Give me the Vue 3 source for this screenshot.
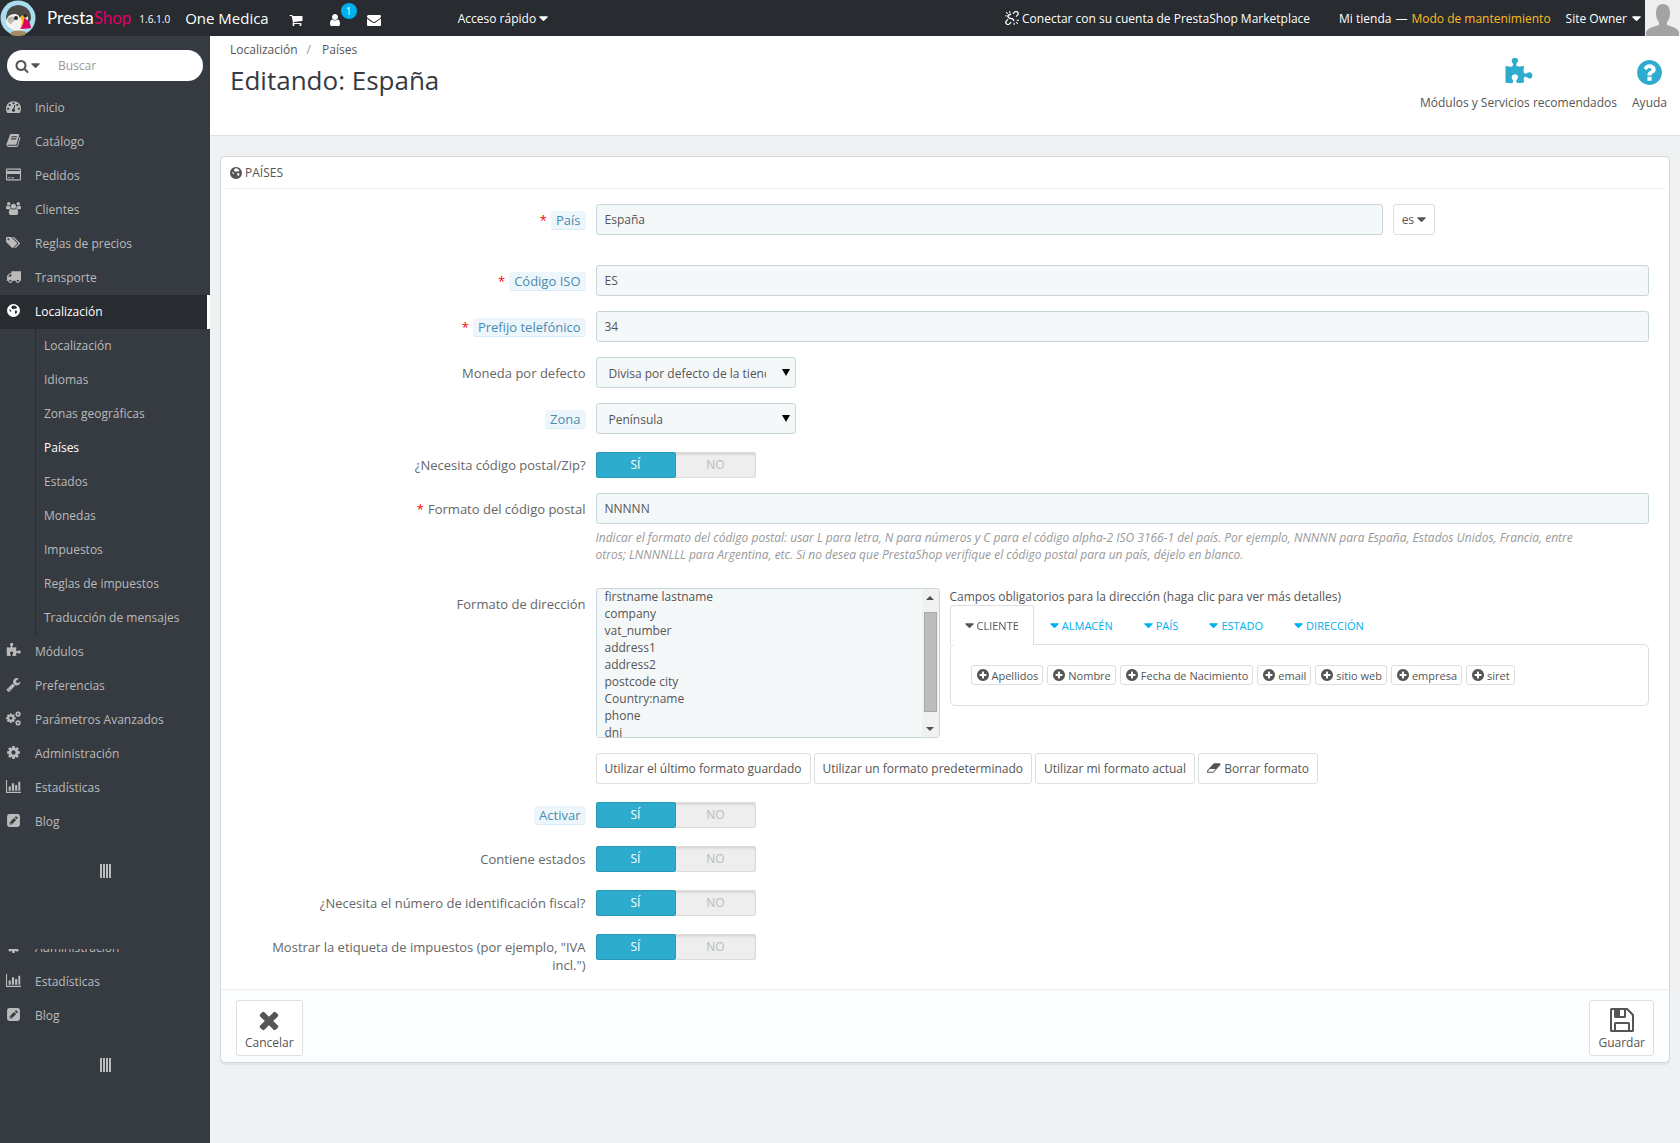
<script setup>
import { computed, h, onMounted, reactive, ref } from 'vue'

const gear = 'M1152 896q0-106-75-181t-181-75-181 75-75 181 75 181 181 75 181-75 75-181zm512-109v222q0 12-8 23t-20 13l-185 28q-19 54-39 91 35 50 107 138 10 12 10 25t-9 23q-27 37-99 108t-94 71q-12 0-26-9l-138-108q-44 23-91 38-16 136-29 186-7 28-36 28h-222q-14 0-24.5-8.5t-11.5-21.5l-28-184q-49-16-90-37l-141 107q-10 9-25 9-14 0-25-11-126-114-165-168-7-10-7-23 0-12 8-23 15-21 51-66.5t54-70.5q-27-50-41-99l-183-27q-13-2-21-12.5t-8-23.5v-222q0-12 8-23t19-13l186-28q14-46 39-92-40-57-107-138-10-12-10-24 0-10 9-23 26-36 98.5-107.5t94.5-71.5q13 0 26 10l138 107q44-23 91-38 16-136 29-186 7-28 36-28h222q14 0 24.5 8.5t11.5 21.5l28 184q49 16 90 37l142-107q9-9 24-9 13 0 25 10 129 119 165 170 7 8 7 22 0 12-8 23-15 21-51 66.5t-54 70.5q26 50 41 98l183 28q13 2 21 12.5t8 23.5z'
const disc = 'M1664 896q0 209-103 385.500t-279.500 279.500-385.500 103-385.500-103-279.500-279.500-103-385.500 103-385.500 279.500-279.500 385.500-103 385.500 103 279.500 279.500 103 385.500z'

const icons = {
  search: 'M1216 832q0-185-131.500-316.500t-316.500-131.500-316.500 131.500-131.500 316.500 131.500 316.500 316.500 131.500 316.500-131.500 131.500-316.500zm512 832q0 52-38 90t-90 38q-54 0-90-38l-343-342q-179 124-399 124-143 0-273.500-55.500t-225-150-150-225-55.500-273.500 55.500-273.500 150-225 225-150 273.500-55.500 273.500 55.500 225 150 150 225 55.500 273.500q0 220-124 399l343 343q37 37 37 90z',
  caret: { box: '288 240 1280 1280', d: 'M1536 640q0 26-19 45l-544 544q-19 19-45 19t-45-19l-544-544q-19-19-19-45t19-45 45-19h1088q26 0 45 19t19 45z' },
  dashboard: 'M384 1152q0-53-37.500-90.500t-90.500-37.500-90.500 37.500-37.500 90.500 37.500 90.500 90.500 37.500 90.500-37.500 37.500-90.500zm192-448q0-53-37.500-90.500t-90.500-37.500-90.500 37.500-37.500 90.500 37.500 90.500 90.500 37.500 90.500-37.500 37.500-90.500zm428 481l101-382q6-26-7.500-48.500t-38.500-29.500-48 6.500-30 39.500l-101 382q-60 5-107 43.500t-63 98.500q-20 77 20 146t117 89 146-20 89-117q16-60-6-117t-72-91zm660-33q0-53-37.500-90.500t-90.500-37.500-90.500 37.500-37.500 90.500 37.500 90.500 90.500 37.500 90.500-37.500 37.500-90.500zm-640-640q0-53-37.500-90.500t-90.500-37.500-90.500 37.500-37.500 90.500 37.500 90.500 90.500 37.500 90.500-37.500 37.500-90.500zm448 192q0-53-37.500-90.500t-90.500-37.500-90.500 37.500-37.500 90.500 37.500 90.500 90.500 37.500 90.500-37.500 37.500-90.500zm320 448q0 261-141 483-19 29-54 29h-1402q-35 0-54-29-141-221-141-483 0-182 71-348t191-286 286-191 348-71 348 71 286 191 191 286 71 348z',
  book: 'M1703 478q40 57 18 129l-275 906q-19 64-76.500 107.500t-122.500 43.500h-923q-77 0-148.500-53.500t-99.500-131.500q-24-67-2-127 0-4 3-27t4-37q1-8-3-21.500t-3-19.500q2-11 8-21t16.500-23.500 16.500-23.500q23-38 45-91.500t30-91.500q3-10 .5-30t-.5-28q3-11 17-28t17-23q21-36 42-92t25-90q1-9-2.500-32t.5-28q4-13 22-30.500t22-22.500q19-26 42.500-84.500t27.500-96.500q1-8-3-25.500t-2-26.500q2-8 9-18t18-23 17-21q8-12 16.500-30.500t15-35 16-36 19.500-32 26.500-23.500 36-11.500 47.500 5.500l-1 3q38-9 51-9h761q74 0 114 56t18 130l-274 906q-36 119-71.500 153.500t-128.500 34.500h-869q-27 0-38 15-11 16-1 43 24 70 144 70h923q29 0 56-15.500t35-41.500l300-987q7-22 5-57 38 15 59 43zm-1064 2q-4 13 2 22.500t20 9.500h608q13 0 25.500-9.500t16.500-22.500l21-64q4-13-2-22.500t-20-9.500h-608q-13 0-25.500 9.500t-16.500 22.500zm-83 256q-4 13 2 22.500t20 9.500h608q13 0 25.500-9.500t16.500-22.500l21-64q4-13-2-22.500t-20-9.500h-608q-13 0-25.500 9.500t-16.500 22.500z',
  card: 'M100 192H1692q100 0 100 100V1500q0 100-100 100H100q-100 0-100-100V292q0-100 100-100zM128 320V480H1664V320zM128 830V1472H1664V830zM256 1216H512V1344H256zM640 1216H960V1344H640z',
  group: 'M330 130a210 210 0 1 1 0 420a210 210 0 1 1 0-420zM1462 130a210 210 0 1 1 0 420a210 210 0 1 1 0-420zM896 330a300 300 0 1 1 0 600a300 300 0 1 1 0-600zM130 550Q330 700 520 600Q500 760 590 860Q470 900 420 980H130Q0 980 0 860Q0 560 130 550zM1662 550Q1462 700 1272 600Q1292 760 1202 860Q1322 900 1372 980H1662Q1792 980 1792 860Q1792 560 1662 550zM620 930Q896 1130 1172 930Q1450 950 1450 1400Q1450 1664 1230 1664H562Q342 1664 342 1400Q342 950 620 930z',
  tags: { box: '0 0 2048 1792', d: 'M448 448q0-53-37.500-90.500t-90.500-37.500-90.500 37.500-37.500 90.500 37.500 90.500 90.500 37.500 90.500-37.500 37.500-90.500zm1067 576q0 53-37 90l-491 492q-39 37-91 37-53 0-90-37l-715-716q-38-37-64.500-101t-26.500-117v-416q0-52 38-90t90-38h416q53 0 117 26.500t102 64.500l715 714q37 39 37 91zm384 0q0 53-37 90l-491 492q-39 37-91 37-36 0-59-14t-53-45l470-470q37-37 37-90 0-52-37-91l-715-714q-38-38-102-64.500t-117-26.500h224q53 0 117 26.500t102 64.500l715 714q37 39 37 91z' },
  truck: 'M640 1408q0-52-38-90t-90-38-90 38-38 90 38 90 90 38 90-38 38-90zm-384-512h384v-256h-158q-13 0-22 9l-195 195q-9 9-9 22v30zm1280 512q0-52-38-90t-90-38-90 38-38 90 38 90 90 38 90-38 38-90zm256-1088v1024q0 15-4 26.500t-13.500 18.500-16.500 11.500-23.500 6-22.500 2-25.500 0-22.500-.5q0 106-75 181t-181 75-181-75-75-181h-384q0 106-75 181t-181 75-181-75-75-181h-64q-3 0-22.500.5t-25.500 0-22.500-2-23.500-6-16.500-11.500-13.500-18.500-4-26.500q0-26 19-45t45-19v-320q0-8-.5-35t0-38 2.500-34.500 6.500-37 14-30.500 22.500-30l198-198q19-19 50.500-32t58.500-13h160v-192q0-26 19-45t45-19h1024q26 0 45 19t19 45z',
  globe: disc + 'M760 330L1000 290L1190 400L1320 560L1180 720L1010 650L900 780L740 700L620 560L690 430zM1060 900L1290 930L1340 1090L1180 1310L1070 1180zM400 740L560 820L650 1000L560 1070L430 900z',
  puzzle: 'M1755 1083q0 81-44.500 135t-123.500 54q-41 0-77.500-17.500t-59-38-56.500-38-71-17.500q-110 0-110 124 0 39 16 115t15 115v5q-22 0-33 1-34 3-97.500 11.500t-115.500 13.500-98 5q-61 0-103-26.500t-42-83.500q0-37 17.500-71t38-56.500 38-59 17.500-77.500q0-79-54-123.500t-135-44.500q-84 0-143 45.500t-59 127.500q0 43 15 83t33.500 64.500 33.500 53 15 50.500q0 45-46 89-37 35-117 35-95 0-245-24-9-2-27.500-4t-27.500-4l-13-2q-1 0-3-1-2 0-2-1v-1024q2 1 17.500 3.500t34 5 21.500 3.500q150 24 245 24 80 0 117-35 46-44 46-89 0-22-15-50.500t-33.500-53-33.500-64.500-15-83q0-82 59-127.500t144-45.500q80 0 134 44.500t54 123.500q0 41-17.500 77.500t-38 59-38 56.500-17.500 71q0 57 42 83.500t103 26.500q64 0 180-15t163-17v2q-1 2-3.500 17.500t-5 34-3.500 21.500q-24 150-24 245 0 80 35 117 44 46 89 46 22 0 50.500-15t53-33.500 64.500-33.500 83-15q82 0 127.500 59t45.500 143z',
  wrench: 'M448 1472q0-26-19-45t-45-19-45 19-19 45 19 45 45 19 45-19 19-45zm644-420l-682 682q-37 37-90 37-52 0-91-37l-106-108q-38-36-38-90 0-53 38-91l681-681q39 98 114.500 173.500t173.500 114.500zm634-435q0 39-23 106-47 134-164.500 217.500t-258.500 83.500q-185 0-316.500-131.500t-131.500-316.500 131.500-316.500 316.500-131.500q58 0 121.500 16.500t107.500 46.500q16 11 16 28t-16 28l-293 169v224l193 107q5-3 79-48.500t135.500-81 70.500-35.500q15 0 23.500 10t8.500 25z',
  cog: gear,
  cogs: [
    { d: gear, transform: 'translate(-90 190) scale(.75)' },
    { d: gear, transform: 'translate(1040 -30) scale(.45)' },
    { d: gear, transform: 'translate(1040 1020) scale(.45)' },
  ],
  chart: 'M0 128H128V1536H1792V1664H0zM320 896H576V1408H320zM704 512H960V1408H704zM1088 704H1344V1408H1088zM1472 320H1700V1408H1472z',
  pencil: 'M416 128H1376Q1664 128 1664 416V1376Q1664 1664 1376 1664H416Q128 1664 128 1376V416Q128 128 416 128zM430 1130V1370H680L1210 840L960 590zM1040 510L1290 760L1390 660Q1440 610 1390 550L1250 410Q1200 360 1140 410zM530 1150H600V1210H660V1280L620 1310L500 1240z',
  cart: 'M704 1536q0 52-38 90t-90 38-90-38-38-90 38-90 90-38 90 38 38 90zm896 0q0 52-38 90t-90 38-90-38-38-90 38-90 90-38 90 38 38 90zm128-1088v512q0 24-16.500 42.500t-40.500 21.500l-1044 122q13 60 13 70 0 16-24 64h920q26 0 45 19t19 45-19 45-45 19h-1024q-26 0-45-19t-19-45q0-11 8-31.500t16-36 21.500-40 15.500-29.500l-177-823h-204q-26 0-45-19t-19-45 19-45 45-19h256q16 0 28.500 6.500t19.500 15.500 13 24.500 8 26 5.500 29.500 4.500 26h1201q26 0 45 19t19 45z',
  user: 'M1536 1399q0 109-62.500 187t-150.500 78h-854q-88 0-150.500-78t-62.500-187q0-85 8.500-160.500t31.500-152 58.500-131 94-89 134.500-34.500q131 128 313 128t313-128q76 0 134.500 34.500t94 89 58.500 131 31.500 152 8.500 160.500zm-256-887q0 159-112.500 271.500t-271.500 112.500-271.500-112.500-112.500-271.500 112.500-271.500 271.500-112.500 271.500 112.500 112.500 271.500z',
  envelope: 'M1792 710v794q0 66-47 113t-113 47h-1472q-66 0-113-47t-47-113v-794q44 49 101 87 362 246 497 345 57 42 92.500 65.500t94.500 48 110 24.500h2q51 0 110-24.500t94.500-48 92.500-65.500q170-123 498-345 57-39 100-87zm0-294q0 79-49 151t-122 123q-376 261-468 325-10 7-42.500 30.500t-54 38-52 32.500-57.500 27-50 9h-2q-23 0-50-9t-57.500-27-52-32.500-54-38-42.500-30.500q-91-64-262-182.500t-205-142.500q-62-42-117-115.500t-55-136.500q0-78 41.500-130t118.500-52h1472q65 0 112.500 47t47.500 113z',
  help: 'M1024 1376v-192q0-14-9-23t-23-9h-192q-14 0-23 9t-9 23v192q0 14 9 23t23 9h192q14 0 23-9t9-23zm256-672q0-88-55.500-163t-138.500-116-170-41q-243 0-371 213-15 24 8 42l132 100q7 6 19 6 16 0 25-12 53-68 86-92 34-24 86-24 48 0 85.500 26t37.500 59q0 38-20 61t-68 45q-63 28-115.500 86.500t-52.500 125.500v36q0 14 9 23t23 9h192q14 0 23-9t9-23q0-19 21.500-49.500t54.500-49.500q32-18 49-28.500t46-35 44.500-48 28-60.500 12.500-81z' + disc,
  plus: 'M1344 960v-128q0-26-19-45t-45-19h-256v-256q0-26-19-45t-45-19h-128q-26 0-45 19t-19 45v256h-256q-26 0-45 19t-19 45v128q0 26 19 45t45 19h256v256q0 26 19 45t45 19h128q26 0 45-19t19-45v-256h256q26 0 45-19t19-45z' + disc,
  eraser: { box: '0 0 1920 1792', d: 'M832 1408l336-384h-768l-336 384h768zm1013-1077q15 34 9.500 71.500t-30.500 65.500l-896 1024q-38 44-96 44h-768q-38 0-69.500-20.500t-47.500-54.500q-15-34-9.500-71.500t30.500-65.500l896-1024q38-44 96-44h768q38 0 69.500 20.500t47.500 54.500z' },
  times: 'M1490 1322q0 40-28 68l-136 136q-28 28-68 28t-68-28l-294-294-294 294q-28 28-68 28t-68-28l-136-136q-28-28-28-68t28-68l294-294-294-294q-28-28-28-68t28-68l136-136q28-28 68-28t68 28l294 294 294-294q28-28 68-28t68 28l136 136q28 28 28 68t-28 68l-294 294 294 294q28 28 28 68z',
  save: 'M224 128H1248L1664 544V1568Q1664 1664 1568 1664H224Q128 1664 128 1568V224Q128 128 224 128zM256 256V1536H384V1120Q384 1024 480 1024H1312Q1408 1024 1408 1120V1536H1536V600L1190 256H1152V672Q1152 768 1056 768H480Q384 768 384 672V256zM768 256V640H1024V256zM512 1152V1536H1280V1152z',
  unlink: 'M440 1130L250 1320A190 190 0 0 0 520 1590L720 1390L830 1500L620 1710A340 340 0 0 1 130 1220L330 1020zM1352 662L1542 472A190 190 0 0 0 1272 202L1072 402L962 292L1172 82A340 340 0 0 1 1662 572L1462 772zM780 330Q440 330 300 620Q240 900 520 1000L900 1080Q1060 1120 990 1230L1110 1340Q1330 1030 980 920L600 830Q420 780 520 600Q600 500 780 500zM0 560H300V680H0zM560 0H680V300H560zM1112 1492H1232V1792H1112zM1492 1112H1792V1232H1492zM180 100L420 340L340 420L100 180zM1612 1692L1372 1452L1452 1372L1692 1612z',
}

function Icon({ name }) {
  const icon = icons[name]
  const parts = Array.isArray(icon) ? icon : [{ d: icon.d || icon }]
  return h('svg', { class: 'icon', viewBox: icon.box || '0 0 1792 1792', 'aria-hidden': 'true' },
    parts.map((part) => h('path', { ...part, 'fill-rule': 'evenodd' })))
}
Icon.props = ['name']

const menuTop = [
  { icon: 'dashboard', label: 'Inicio' },
  { icon: 'book', label: 'Catálogo' },
  { icon: 'card', label: 'Pedidos' },
  { icon: 'group', label: 'Clientes' },
  { icon: 'tags', label: 'Reglas de precios' },
  { icon: 'truck', label: 'Transporte' },
  {
    icon: 'globe',
    label: 'Localización',
    active: true,
    children: ['Localización', 'Idiomas', 'Zonas geográficas', 'Países', 'Estados', 'Monedas', 'Impuestos', 'Reglas de impuestos', 'Traducción de mensajes'],
  },
  { icon: 'puzzle', label: 'Módulos' },
  { icon: 'wrench', label: 'Preferencias' },
  { icon: 'cogs', label: 'Parámetros Avanzados' },
  { icon: 'cog', label: 'Administración' },
  { icon: 'chart', label: 'Estadísticas' },
  { icon: 'pencil', label: 'Blog' },
]
const menus = [menuTop, menuTop.slice(-3)]

const tabs = ['Cliente', 'Almacén', 'País', 'Estado', 'Dirección']
const activeTab = ref('Cliente')
const fields = ['Apellidos', 'Nombre', 'Fecha de Nacimiento', 'email', 'sitio web', 'empresa', 'siret']

const form = reactive({
  name: 'España',
  iso: 'ES',
  prefix: '34',
  currency: '0',
  zone: '1',
  zipFormat: 'NNNNN',
  layout: 'firstname lastname\ncompany\nvat_number\naddress1\naddress2\npostcode city\nCountry:name\nphone\ndni',
  need_zip: true,
  active: true,
  states: true,
  dni: true,
  tax: true,
})

const switches = [
  { key: 'active', label: 'Activar', hint: true },
  { key: 'states', label: 'Contiene estados' },
  { key: 'dni', label: '¿Necesita el número de identificación fiscal?' },
  { key: 'tax', label: 'Mostrar la etiqueta de impuestos (por ejemplo, "IVA incl.")' },
]

// scroll position of the address layout box, in percent of its content
const layoutBox = ref(null)
const scroll = reactive({ top: 0, size: 100 })
const thumbStyle = computed(() => ({ top: scroll.top + '%', height: scroll.size + '%' }))

function updateScroll() {
  const el = layoutBox.value
  scroll.top = (el.scrollTop / el.scrollHeight) * 100
  scroll.size = (el.clientHeight / el.scrollHeight) * 100
}

function scrollLayout(delta) {
  layoutBox.value.scrollTop += delta
}

function addField(field) {
  form.layout += '\n' + field
}

onMounted(() => {
  layoutBox.value.scrollTop = 9
  updateScroll()
})
</script>

<template>
  <header class="topbar">
    <svg class="logo" viewBox="0 0 36 36" aria-hidden="true">
      <circle cx="18" cy="18" r="17.500" fill="#a9dcec" />
      <path d="M6 19Q6 6 18 5Q31 6 31 19L27 27Q18 32 9 26Z" fill="#4c4a46" />
      <path d="M6 20Q9 13 16 14Q19 15 20 18Q24 12 28 17L27 28Q17 34 10 28Q5 25 6 20Z" fill="#f3f3ef" />
      <path d="M7 19Q12 14 16 19L11 24Q8 23 7 19Z" fill="#b9b9b4" />
      <circle cx="16" cy="18" r="2" fill="#24262a" />
      <circle cx="25" cy="16" r="2" fill="#24262a" />
      <path d="M20 17Q24 14 26 20L23 28Q19 27 22 23Q22 20 20 17Z" fill="#f6b81a" />
      <path d="M24 18Q30 20 31 28Q25 29 20 29Q24 25 24 18Z" fill="#df0067" />
      <path d="M11 32Q18 29 26 32L25 35Q18 37 11 35Z" fill="#a58a5e" />
    </svg>
    <a href="#" class="brand">Presta<span>Shop</span></a>
    <span class="version">1.6.1.0</span>
    <a href="#" class="shop-name">One Medica</a>
    <nav class="notifs" aria-label="Notificaciones">
      <a href="#" aria-label="Pedidos"><Icon name="cart" /></a>
      <a href="#" aria-label="Clientes"><Icon name="user" /><span class="count">1</span></a>
      <a href="#" aria-label="Mensajes"><Icon name="envelope" /></a>
    </nav>
    <button type="button" class="top-btn quick">Acceso rápido <Icon name="caret" /></button>
    <div class="top-right">
      <a href="#" class="market"><Icon name="unlink" /> Conectar con su cuenta de PrestaShop Marketplace</a>
      <span class="shop-state"><a href="#">Mi tienda</a><span>—</span><a href="#" class="maintenance">Modo de mantenimiento</a></span>
      <button type="button" class="top-btn owner">Site Owner <Icon name="caret" /></button>
      <svg class="avatar" viewBox="0 0 35 36" aria-hidden="true">
        <rect width="35" height="36" fill="#eee" />
        <path d="M18 4Q25 4 25 13Q25 19 22 22V25Q34 28 34 33V36H1V33Q1 28 14 25V22Q11 19 11 13Q11 4 18 4Z" fill="#a3a3a3" />
      </svg>
    </div>
  </header>

  <div class="layout">
    <aside class="sidebar">
      <form class="search" role="search" @submit.prevent>
        <button type="button" aria-label="Buscar en"><Icon name="search" /><Icon name="caret" /></button>
        <input type="search" placeholder="Buscar" aria-label="Buscar" />
      </form>
      <nav v-for="(menu, i) in menus" :key="i" :class="['menu', { 'menu-rest': i > 0 }]">
        <ul>
          <li v-for="item in menu" :key="item.label" :class="{ active: item.active }">
            <a href="#" class="menu-link"><Icon :name="item.icon" /><span>{{ item.label }}</span></a>
            <ul v-if="item.children" class="submenu">
              <li v-for="child in item.children" :key="child"><a href="#" :class="{ current: child === 'Países' }">{{ child }}</a></li>
            </ul>
          </li>
        </ul>
        <button type="button" class="collapse" aria-label="Contraer menú"><i></i><i></i><i></i><i></i></button>
      </nav>
    </aside>

    <main class="content">
      <div class="page-head">
        <div>
          <nav class="breadcrumb" aria-label="Ruta"><a href="#">Localización</a><span>/</span><a href="#">Países</a></nav>
          <h1>Editando: España</h1>
        </div>
        <div class="toolbar">
          <a href="#"><Icon name="puzzle" />Módulos y Servicios recomendados</a>
          <a href="#"><Icon name="help" />Ayuda</a>
        </div>
      </div>

      <form class="panel" @submit.prevent>
        <h2 class="panel-title"><Icon name="globe" /> Países</h2>
        <div class="panel-body">
          <div class="row row-lang">
            <label for="name" class="required"><span class="hint">País</span></label>
            <div class="field split">
              <input id="name" v-model="form.name" type="text" class="control" />
              <button type="button" class="btn lang">es <Icon name="caret" /></button>
            </div>
          </div>
          <div class="row">
            <label for="iso" class="required"><span class="hint">Código ISO</span></label>
            <div class="field"><input id="iso" v-model="form.iso" type="text" class="control" /></div>
          </div>
          <div class="row">
            <label for="prefix" class="required"><span class="hint">Prefijo telefónico</span></label>
            <div class="field"><input id="prefix" v-model="form.prefix" type="text" class="control" /></div>
          </div>
          <div class="row">
            <label for="currency">Moneda por defecto</label>
            <div class="field">
              <div class="select">
                <select id="currency" v-model="form.currency" class="control"><option value="0">Divisa por defecto de la tienda</option></select>
              </div>
            </div>
          </div>
          <div class="row">
            <label for="zone"><span class="hint">Zona</span></label>
            <div class="field">
              <div class="select">
                <select id="zone" v-model="form.zone" class="control"><option value="1">Península</option></select>
              </div>
            </div>
          </div>
          <div class="row" role="radiogroup" aria-labelledby="need_zip">
            <span id="need_zip" class="label">¿Necesita código postal/Zip?</span>
            <div class="field">
              <div class="switch">
                <label><input v-model="form.need_zip" type="radio" name="need_zip" :value="true" /><span>SÍ</span></label>
                <label><input v-model="form.need_zip" type="radio" name="need_zip" :value="false" /><span>NO</span></label>
              </div>
            </div>
          </div>
          <div class="row">
            <label for="zip" class="required">Formato del código postal</label>
            <div class="field">
              <input id="zip" v-model="form.zipFormat" type="text" class="control" />
              <p class="help">Indicar el formato del código postal: usar L para letra, N para números y C para el código alpha-2 ISO 3166-1 del país. Por ejemplo, NNNNN para España, Estados Unidos, Francia, entre otros; LNNNNLLL para Argentina, etc. Si no desea que PrestaShop verifique el código postal para un país, déjelo en blanco.</p>
            </div>
          </div>
          <div class="row">
            <label for="layout">Formato de dirección</label>
            <div class="field">
              <div class="address">
                <div class="layout-box">
                  <textarea id="layout" ref="layoutBox" v-model="form.layout" class="control" @scroll="updateScroll"></textarea>
                  <div class="scrollbar">
                    <button type="button" tabindex="-1" aria-label="Subir" @click="scrollLayout(-17)"></button>
                    <div class="track"><div class="thumb" :style="thumbStyle"></div></div>
                    <button type="button" tabindex="-1" aria-label="Bajar" class="down" @click="scrollLayout(17)"></button>
                  </div>
                </div>
                <div class="address-fields">
                  <p>Campos obligatorios para la dirección (haga clic para ver más detalles)</p>
                  <div class="tabs" role="tablist">
                    <button v-for="tab in tabs" :key="tab" type="button" role="tab" :aria-selected="tab === activeTab" :class="{ active: tab === activeTab }" @click="activeTab = tab"><Icon name="caret" /> {{ tab }}</button>
                  </div>
                  <div class="tab-pane">
                    <button v-for="field in fields" :key="field" type="button" class="chip" @click="addField(field)"><Icon name="plus" /> {{ field }}</button>
                  </div>
                </div>
              </div>
              <div class="formats">
                <button type="button" class="btn">Utilizar el último formato guardado</button>
                <button type="button" class="btn">Utilizar un formato predeterminado</button>
                <button type="button" class="btn">Utilizar mi formato actual</button>
                <button type="button" class="btn" @click="form.layout = ''"><Icon name="eraser" /> Borrar formato</button>
              </div>
            </div>
          </div>
          <div v-for="item in switches" :key="item.key" class="row" role="radiogroup" :aria-labelledby="item.key">
            <span :id="item.key" class="label"><span :class="{ hint: item.hint }">{{ item.label }}</span></span>
            <div class="field">
              <div class="switch">
                <label><input v-model="form[item.key]" type="radio" :name="item.key" :value="true" /><span>SÍ</span></label>
                <label><input v-model="form[item.key]" type="radio" :name="item.key" :value="false" /><span>NO</span></label>
              </div>
            </div>
          </div>
        </div>
        <div class="panel-foot">
          <button type="button" class="btn big"><Icon name="times" />Cancelar</button>
          <button type="submit" class="btn big"><Icon name="save" />Guardar</button>
        </div>
      </form>
    </main>
  </div>
</template>

<style>
body {
  background: #eff1f2;
  color: #555;
  font: 12px/17px "Open Sans", "Noto Sans", sans-serif;
}
</style>

<style scoped>
* { box-sizing: border-box; }
a { color: inherit; text-decoration: none; }
ul { list-style: none; margin: 0; padding: 0; }
p, h1, h2 { margin: 0; font-weight: 400; }
button, input, select, textarea { font: inherit; color: inherit; }
button { cursor: pointer; }
.icon { width: 14px; height: 14px; fill: currentColor; flex: none; }

.topbar {
  height: 36px;
  display: flex;
  align-items: center;
  background: #282b30;
  color: #fff;
}
.logo { width: 36px; height: 36px; margin-right: 11px; }
.brand { font: 17px/34px Lato, sans-serif; }
.brand span { color: #df0067; }
.version { margin-left: 8px; font-size: 10px; padding-top: 3px; }
.shop-name { margin-left: 15px; font-size: 15px; }
.notifs { display: flex; gap: 25px; margin-left: 20px; }
.notifs a { position: relative; display: flex; padding-top: 3px; }
.count {
  position: absolute;
  left: 13px;
  top: -7px;
  width: 16px;
  border-radius: 50%;
  background: #00aff0;
  font-size: 10px;
  line-height: 16px;
  text-align: center;
}
.top-btn { display: flex; align-items: center; gap: 3px; padding: 0; border: 0; background: none; }
.top-btn .icon { width: 9px; height: 9px; }
.quick { margin-left: 77px; }
.top-right { display: flex; align-items: center; margin-left: auto; }
.market { display: flex; align-items: center; gap: 3px; margin-right: 29px; }
.shop-state { display: flex; gap: 4px; margin-right: 15px; }
.maintenance { color: #fbbb22; }
.top-btn.owner { gap: 5px; }
.avatar { width: 35px; height: 36px; margin-left: 4px; }

.layout { display: flex; min-height: calc(100vh - 36px); }

.sidebar { flex: 0 0 210px; min-width: 0; padding-top: 14px; background: #363a41; color: #bbb; }
.search {
  display: flex;
  align-items: center;
  height: 31px;
  margin: 0 7px 10px;
  border-radius: 16px;
  background: #fff;
  overflow: hidden;
}
.search button { display: flex; align-items: center; gap: 2px; padding: 0 0 0 8px; border: 0; background: none; color: #555; }
.search button .icon:last-child { width: 9px; height: 9px; }
.search input { flex: 1; width: 0; margin-left: 18px; padding: 0; border: 0; outline: 0; background: none; }
.search input::placeholder { color: #999; }

.menu-link { display: flex; align-items: center; gap: 14px; height: 34px; padding: 0 0 2px 6px; }
.menu-link .icon { width: 15px; height: 15px; margin-bottom: 2px; }
.active > .menu-link { background: #282b30; color: #fff; border-right: 3px solid #fff; }
.submenu { margin-left: 35px; border-left: 1px solid #282b30; }
.submenu a { display: block; padding-left: 8px; line-height: 34px; }
.submenu .current { color: #fff; }
.collapse { display: flex; gap: 1px; height: 14px; margin: 25px auto 71px; padding: 0; border: 0; background: none; }
.collapse i { width: 2px; height: 14px; background: #bbb; }
.menu-rest { overflow: hidden; }
.menu-rest > ul { margin-top: -18px; }

.content { flex: 1; min-width: 0; }
.page-head {
  display: flex;
  justify-content: space-between;
  height: 100px;
  padding: 5px 13px 0 20px;
  background: #fff;
  border-bottom: 1px solid #dcdedf;
}
.breadcrumb { display: flex; }
.breadcrumb span { margin: 0 11px 0 9px; color: #999; }
.page-head h1 { margin-top: 4px; font-size: 26px; line-height: 36px; color: #363a41; }
.toolbar { display: flex; gap: 15px; padding-top: 17px; }
.toolbar a { display: flex; flex-direction: column; align-items: center; gap: 7px; }
.toolbar .icon { width: 29px; height: 29px; color: #2eacce; }

.panel {
  margin: 20px 10px;
  border: 1px solid #d3d8db;
  border-radius: 5px;
  background: #fff;
  box-shadow: 0 2px 0 rgba(0, 0, 0, 0.05);
}
.panel-title {
  display: flex;
  align-items: center;
  gap: 2px;
  height: 32px;
  margin: 0 4px;
  padding: 0 4px;
  border-bottom: 1px solid #eee;
  font-size: 12px;
  text-transform: uppercase;
}
.panel-body { padding: 15px 15px 0; }
.row { display: flex; margin-bottom: 15px; }
.row-lang { margin-bottom: 30px; }
.row > label, .row > .label {
  flex: 0 0 25%;
  padding: 7px 5px 0 6px;
  font-size: 13px;
  line-height: 18px;
  text-align: right;
  color: #666;
}
.required::before { content: "*"; margin-right: 4px; color: red; }
.hint {
  display: inline-block;
  padding: 0 5px;
  border-bottom: 1px solid #d6ebf7;
  border-radius: 3px;
  background: #edf7fb;
  color: #4a8ab0;
}
.field { flex: 1; min-width: 0; padding: 0 5px; }
.split { display: flex; gap: 10px; }
.control {
  display: block;
  width: 100%;
  height: 31px;
  padding: 6px 8px;
  border: 1px solid #c7d6db;
  border-radius: 3px;
  background: #f5f8f9;
  line-height: 17px;
  outline: 0;
}
.control:focus { border-color: #66afe9; }
.split .control { width: calc(75% - 3px); }
.select { position: relative; width: 200px; }
.select::after {
  content: "";
  position: absolute;
  right: 6px;
  top: 12px;
  border: 4px solid transparent;
  border-top: 7px solid #000;
  border-bottom: 0;
  pointer-events: none;
}
.select .control { appearance: none; padding: 6px 29px 4px 12px; }
.btn {
  height: 31px;
  padding: 0 8px;
  border: 1px solid #dedede;
  border-radius: 3px;
  background: #fff;
  white-space: nowrap;
}
.btn:hover, .chip:hover { border-color: #bbb; }
.lang { display: flex; align-items: center; gap: 3px; }
.lang .icon { width: 9px; height: 9px; }

.switch {
  display: flex;
  width: 160px;
  height: 26px;
  margin-top: 3px;
  border-radius: 3px;
  background: #eee;
  box-shadow: inset 0 0 0 1px #dcdcdc, inset 0 2px 3px rgba(0, 0, 0, 0.15);
}
.switch label { position: relative; flex: 1; cursor: pointer; }
.switch input { position: absolute; margin: 0; opacity: 0; }
.switch span { display: block; height: 26px; border-radius: 3px; line-height: 25px; text-align: center; color: #bbb; }
.switch input:checked + span { background: #2eacce; color: #fff; box-shadow: inset 0 0 0 1px #2798b6; }

.help { margin: 5px 0 10px; padding-right: 50px; font-style: italic; color: #999; }

.address { display: flex; gap: 10px; }
.address-fields { flex: 1; min-width: 0; }
.layout-box { position: relative; flex: 0 0 344px; }
textarea.control { height: 150px; padding: 8px 25px 8px 8px; resize: none; overflow-y: scroll; scrollbar-width: none; }
.scrollbar {
  position: absolute;
  top: 1px;
  right: 1px;
  bottom: 1px;
  display: flex;
  flex-direction: column;
  width: 17px;
  border-radius: 0 2px 2px 0;
  background: #f1f1f1;
}
.scrollbar button { display: grid; place-items: center; height: 17px; padding: 0; border: 0; background: none; }
.scrollbar button::before {
  content: "";
  border: 4px solid transparent;
  border-top: 0;
  border-bottom-color: #505050;
}
.scrollbar .down::before { border-top: 4px solid #505050; border-bottom: 0; }
.track { position: relative; flex: 1; }
.thumb { position: absolute; left: 2px; right: 2px; border: 1px solid #a8a8a8; background: #bcbcbc; }

.tabs { display: flex; gap: 1px; height: 39px; }
.tabs button {
  display: flex;
  align-items: center;
  gap: 3px;
  height: 40px;
  padding: 0 14px;
  border: 1px solid transparent;
  border-bottom: 0;
  border-radius: 3px 3px 0 0;
  background: none;
  color: #00aff0;
  font-size: 11px;
  text-transform: uppercase;
}
.tabs button.active { position: relative; z-index: 1; border-color: #dedede; background: #fff; color: #555; }
.tabs .icon { width: 9px; height: 9px; }
.tab-pane {
  display: flex;
  flex-wrap: wrap;
  gap: 4px;
  padding: 20px;
  border: 1px solid #dedede;
  border-radius: 5px;
}
.chip {
  display: flex;
  align-items: center;
  gap: 2px;
  height: 20px;
  padding: 0 4px;
  border: 1px solid #dedede;
  border-radius: 3px;
  background: #fff;
  font-size: 11px;
}
.formats { display: flex; flex-wrap: wrap; gap: 3px; margin-top: 15px; }
.formats .icon { vertical-align: -2px; }

.panel-foot {
  display: flex;
  justify-content: space-between;
  padding: 10px 15px 6px;
  border-top: 1px solid #eee;
  border-radius: 0 0 5px 5px;
  background: #fcfdfe;
}
.big { display: flex; flex-direction: column; align-items: center; height: 56px; padding: 5px 8px; }
.big .icon { width: 28px; height: 28px; }
</style>
